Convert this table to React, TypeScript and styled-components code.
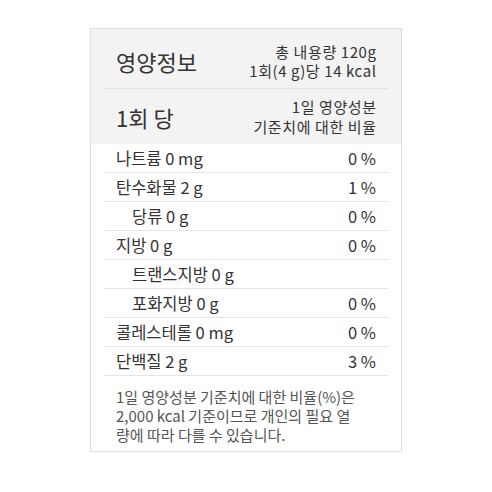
import styled, { createGlobalStyle } from 'styled-components';

const GlobalStyle = createGlobalStyle`
  body {
    margin: 0;
    background: #ffffff;
    font-family: 'Noto Sans CJK KR', 'Noto Sans', sans-serif;
    color: #333333;
  }
`;

type Nutrient = {
  name: string;
  amount: string;
  percent?: string;
  sub?: boolean;
};

const nutrients: Array<Nutrient> = [
  { name: '나트륨', amount: '0 mg', percent: '0 %' },
  { name: '탄수화물', amount: '2 g', percent: '1 %' },
  { name: '당류', amount: '0 g', percent: '0 %', sub: true },
  { name: '지방', amount: '0 g', percent: '0 %' },
  { name: '트랜스지방', amount: '0 g', sub: true },
  { name: '포화지방', amount: '0 g', percent: '0 %', sub: true },
  { name: '콜레스테롤', amount: '0 mg', percent: '0 %' },
  { name: '단백질', amount: '2 g', percent: '3 %' },
];

export default function App() {
  return (
    <>
      <GlobalStyle />
      <SPage>
        <SCard>
          <SHead>
            <SHeadRow $top>
              <SHeadTitle>영양정보</SHeadTitle>
              <SHeadInfo>
                <SInfoLine>총 내용량 120g</SInfoLine>
                <SInfoLine>1회(4 g)당 14 kcal</SInfoLine>
              </SHeadInfo>
            </SHeadRow>
            <SHeadRow>
              <SHeadTitle>1회 당</SHeadTitle>
              <SHeadInfo>
                <SInfoLine $tall>1일 영양성분</SInfoLine>
                <SInfoLine $tall>기준치에 대한 비율</SInfoLine>
              </SHeadInfo>
            </SHeadRow>
          </SHead>
          <SBody>
            {nutrients.map((n) => (
              <SRow key={n.name}>
                <SName $sub={n.sub}>
                  {n.name} {n.amount}
                </SName>
                <SPercent>{n.percent}</SPercent>
              </SRow>
            ))}
            <SNote>
              <SNoteLine>1일 영양성분 기준치에 대한 비율(%)은</SNoteLine>
              <SNoteLine>2,000 kcal 기준이므로 개인의 필요 열</SNoteLine>
              <SNoteLine>량에 따라 다를 수 있습니다.</SNoteLine>
            </SNote>
          </SBody>
        </SCard>
      </SPage>
    </>
  );
}

const SPage = styled.div`
  padding: 28px 0 0 90px;
`;

const SCard = styled.div`
  box-sizing: border-box;
  width: 312px;
  border: 1px solid #dedede;
  box-shadow: 0 0 1px #e6e6e6;
  background: #ffffff;
`;

const SHead = styled.div`
  background: #f4f3f3;
  padding: 0 13px;
`;

const SHeadRow = styled.div<{ $top?: boolean }>`
  display: flex;
  justify-content: space-between;
  align-items: center;
  padding: ${(p) => (p.$top ? '13px 12px 8px' : '8px 12px 7px')};
  border-bottom: ${(p) => (p.$top ? '1px solid #e2e1e1' : 'none')};
`;

const SHeadTitle = styled.h2`
  margin: 0;
  font-size: 22px;
  font-weight: 400;
  color: #333333;
  line-height: 28px;
`;

const SHeadInfo = styled.div`
  display: flex;
  flex-direction: column;
  align-items: flex-end;
  font-size: 15px;
  letter-spacing: 0.6px;
  color: #333333;
`;

const SInfoLine = styled.span<{ $tall?: boolean }>`
  display: block;
  height: ${(p) => (p.$tall ? '20px' : '19px')};
  line-height: ${(p) => (p.$tall ? '20px' : '19px')};
  margin-right: -0.6px;
  white-space: nowrap;
`;

const SBody = styled.div`
  padding: 0 13px;
`;

const SRow = styled.div`
  display: flex;
  justify-content: space-between;
  align-items: center;
  height: 28px;
  padding: 0 12px;
  border-bottom: 1px solid #e4e4e4;
  font-size: 16.5px;
  color: #333333;
`;

const SName = styled.span<{ $sub?: boolean }>`
  padding-left: ${(p) => (p.$sub ? '16px' : '0')};
`;

const SPercent = styled.span`
  text-align: right;
`;

const SNote = styled.div`
  padding: 11px 12px 7px;
  font-size: 15px;
  color: #555555;
`;

const SNoteLine = styled.p`
  margin: 0;
  height: 19px;
  line-height: 19px;
  white-space: nowrap;
`;
